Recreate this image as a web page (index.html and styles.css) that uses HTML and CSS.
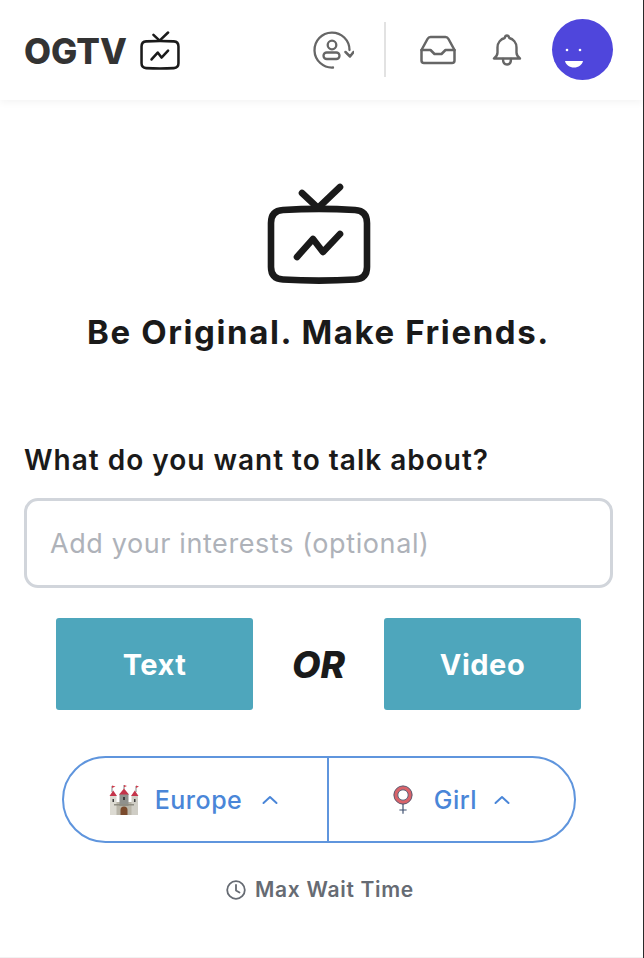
FILE: index.html
```html
<!DOCTYPE html>
<html lang="en">
<head>
  <meta charset="UTF-8" />
  <title>OGTV</title>
  <link rel="stylesheet" href="styles.css">
</head>
<body>

  <header class="topbar">
    <div class="brand">
      <span class="brand-name">OGTV</span>
      <svg class="brand-tv" viewBox="0 0 104 104" fill="none" stroke="#1a1a1a" stroke-width="6.600" stroke-linecap="round" stroke-linejoin="round">
        <path d="M4 40c0-8 4-12.500 12-13 24-1.500 48-1.500 72 0 8 .5 12 5 12 13v44c0 8-4 12-12 12.500-24 1.500-48 1.500-72 0-8-.5-12-4.500-12-12.500z"/>
        <path d="M35 10l16 15 22-21"/>
        <path d="M30 74l16-18 10 13 17-18"/>
      </svg>
    </div>
    <nav class="actions">
      <svg class="icon icon-user" viewBox="0 0 42 42" fill="none" stroke="#666" stroke-width="2.300" stroke-linecap="round" stroke-linejoin="round">
        <path d="M21 38.500A17.500 17.500 0 1 1 37.500 21"/>
        <path d="M33.500 23l4.500 4.500 3.500-4.500" stroke-width="2.500"/>
        <circle cx="20" cy="16" r="4.300"/>
        <rect x="11.500" y="23.500" width="16" height="6.500" rx="3.200"/>
      </svg>
      <span class="divider"></span>
      <svg class="icon icon-inbox" viewBox="0 0 36 30" fill="none" stroke="#666" stroke-width="2.500" stroke-linecap="round" stroke-linejoin="round">
        <path d="M1.500 15v10.500c0 1.500 1 2.500 2.500 2.500h28c1.500 0 2.500-1 2.500-2.500V15L28.500 4C27.800 2.700 27 2 25.500 2h-15C9 2 8.200 2.700 7.500 4z"/>
        <path d="M1.500 15h9l4 4h7l4-4h9"/>
      </svg>
      <svg class="icon icon-bell" viewBox="0 0 30 32" fill="none" stroke="#666" stroke-width="2.400" stroke-linecap="round" stroke-linejoin="round">
        <path d="M2 24.500h26c-2-1.500-3.500-3-3.500-6v-5c0-5-3.500-8.500-7.200-9.500-.3-1.500-1-2.500-2.300-2.500s-2 1-2.300 2.500c-3.700 1-7.200 4.500-7.200 9.500v5c0 3-1.500 4.500-3.500 6z"/>
        <path d="M11 25c0 3.500 1.800 5.500 4 5.500s4-2 4-5.500"/>
      </svg>
      <div class="avatar">
        <svg viewBox="0 0 61 61">
          <circle cx="15" cy="31" r="1.300" fill="#fff"/>
          <circle cx="28" cy="31" r="1.300" fill="#fff"/>
          <path d="M13 42h18c-1 4-4.500 6.500-9 6.500s-8-2.500-9-6.500z" fill="#fff"/>
        </svg>
      </div>
    </nav>
  </header>

  <main class="content">
    <svg class="hero-tv" viewBox="0 0 104 104" fill="none" stroke="#1a1a1a" stroke-width="6.600" stroke-linecap="round" stroke-linejoin="round">
      <path d="M4 40c0-8 4-12.500 12-13 24-1.500 48-1.500 72 0 8 .5 12 5 12 13v44c0 8-4 12-12 12.500-24 1.500-48 1.500-72 0-8-.5-12-4.500-12-12.500z"/>
      <path d="M35 10l16 15 22-21"/>
      <path d="M30 74l16-18 10 13 17-18"/>
    </svg>
    <h1 class="tagline">Be Original. Make Friends.</h1>

    <h2 class="prompt">What do you want to talk about?</h2>
    <input class="interests" type="text" placeholder="Add your interests (optional)" />

    <div class="start-row">
      <button class="start-btn">Text</button>
      <span class="or">OR</span>
      <button class="start-btn">Video</button>
    </div>

    <div class="filters">
      <div class="filter filter-region">
        <svg class="emoji" viewBox="0 0 30 30">
          <path d="M3 1v6M27 1v6M15 0v4" stroke="#666" stroke-width=".8"/>
          <path d="M3 .5l3.500 1L3 3zM27 .5l3 1-3 1.500zM15 0l3 1-3 1.200z" fill="#d03a4c"/>
          <rect x="5" y="17" width="20" height="13" fill="#b9b5a8"/>
          <rect x="10.500" y="9" width="9" height="12" fill="#8f908c"/>
          <rect x="1" y="11" width="6.500" height="19" fill="#dcdad2"/>
          <rect x="22.500" y="11" width="6.500" height="19" fill="#cfcdc5"/>
          <path d="M.5 11L4.200 5.500 8 11zM22 11l3.800-5.500L29.500 11zM10 9.500L15 3.500l5 6z" fill="#c4344a"/>
          <path d="M11.500 30v-5a3.500 3.500 0 0 1 7 0v5z" fill="#7a4a2c"/>
          <path d="M3.500 14h1.500v3H3.500zM25 14h1.500v3H25zM14 12h2v3h-2z" fill="#3d3d3d"/>
          <path d="M5 19h20v1.500H5z" fill="#8f8d82"/>
        </svg>
        <span class="filter-label">Europe</span>
        <svg class="chevron" viewBox="0 0 16 10" fill="none" stroke="#4a86d8" stroke-width="2" stroke-linecap="round" stroke-linejoin="round"><path d="M1.500 8L8 2l6.500 6"/></svg>
      </div>
      <div class="filter filter-gender">
        <svg class="emoji female" viewBox="0 0 22 32" fill="none">
          <circle cx="11" cy="10.500" r="8" stroke="#d9636a" stroke-width="4.500"/>
          <circle cx="11" cy="10.500" r="10" stroke="#4d5a72" stroke-width="1"/>
          <circle cx="11" cy="10.500" r="5.700" stroke="#4d5a72" stroke-width="1"/>
          <path d="M11 20.500V31M7 27h8" stroke="#3f5070" stroke-width="1.300"/>
        </svg>
        <span class="filter-label">Girl</span>
        <svg class="chevron chevron-gender" viewBox="0 0 16 10" fill="none" stroke="#4a86d8" stroke-width="2" stroke-linecap="round" stroke-linejoin="round"><path d="M1.500 8L8 2l6.500 6"/></svg>
      </div>
    </div>

    <div class="wait">
      <svg class="clock" viewBox="0 0 20 20" fill="none" stroke="#666b73" stroke-width="1.800" stroke-linecap="round" stroke-linejoin="round">
        <circle cx="10" cy="10" r="8.800"/>
        <path d="M10 5v5.500l3.500 2"/>
      </svg>
      <span>Max Wait Time</span>
    </div>
  </main>

</body>
</html>
```

FILE: styles.css
```css
* {
  box-sizing: border-box;
}
html {
  background: #2a2a2a;
}
body {
  margin: 0 1px 0 0;
  height: 958px;
  overflow: hidden;
  background: white;
  border-bottom: 1px solid #f2f2f2;
  font-family: "Inter", "Liberation Sans", sans-serif;
}
.topbar {
  height: 100px;
  padding: 19px 30px 0 24px;
  display: flex;
  justify-content: space-between;
  align-items: flex-start;
  background: white;
  box-shadow: 0 2px 8px rgba(0,0,0,0.05);
}
.brand {
  display: flex;
  align-items: center;
  gap: 13px;
  margin-top: 11px;
}
.brand-name {
  font-size: 35px;
  font-weight: 800;
  color: #333;
}
.brand-tv {
  width: 40px;
  height: 40px;
}
.actions {
  display: flex;
  align-items: center;
  height: 61px;
}
.icon {
  display: block;
}
.icon-user {
  width: 42px;
  height: 42px;
}
.divider {
  width: 2px;
  height: 55px;
  margin: 0 34px 0 30px;
  background: #e2e2e2;
}
.icon-inbox {
  width: 36px;
  height: 30px;
  margin-right: 36px;
}
.icon-bell {
  width: 30px;
  height: 32px;
  margin-right: 30px;
}
.avatar {
  width: 61px;
  height: 61px;
  border-radius: 50%;
  background: #4f46dc;
}
.avatar svg {
  display: block;
  width: 100%;
  height: 100%;
}
.content {
  display: flex;
  flex-direction: column;
  align-items: center;
  padding: 83px 30px 0 24px;
}
.hero-tv {
  width: 104px;
  height: 104px;
}
.tagline {
  margin: 23px 0 0;
  font-size: 33px;
  font-weight: 700;
  letter-spacing: 1.6px;
  line-height: 44px;
  color: #1a1a1a;
}
.prompt {
  align-self: flex-start;
  margin: 87px 0 0;
  font-size: 28px;
  font-weight: 600;
  letter-spacing: 1px;
  line-height: 38px;
  color: #1a1a1a;
}
.interests {
  width: 100%;
  height: 90px;
  margin-top: 19px;
  padding: 0 23px;
  border: 3px solid #d1d5db;
  border-radius: 14px;
  font-family: "Inter", sans-serif;
  font-size: 27px;
  letter-spacing: 0.6px;
  color: #333;
  outline: none;
}
.interests::placeholder {
  color: #aeb2b9;
}
.start-row {
  display: flex;
  align-items: center;
  width: 525px;
  margin-top: 30px;
}
.start-btn {
  width: 197px;
  height: 92px;
  border: none;
  border-radius: 3px;
  background: #4ea6bc;
  color: white;
  font-family: "Inter", sans-serif;
  font-size: 29px;
  font-weight: 700;
  letter-spacing: 0.5px;
}
.or {
  flex: 1;
  text-align: center;
  font-size: 37px;
  font-style: italic;
  font-weight: 800;
  color: #1a1a1a;
}
.filters {
  display: flex;
  width: 514px;
  height: 87px;
  margin-top: 46px;
  border: 2px solid #5f95dd;
  border-radius: 44px;
}
.filter {
  display: flex;
  align-items: center;
  justify-content: center;
  height: 100%;
}
.filter-region {
  width: 265px;
  border-right: 2px solid #5f95dd;
  padding-right: 3px;
}
.filter-gender {
  flex: 1;
  padding: 0 2px 0 3px;
}
.emoji {
  width: 30px;
  height: 30px;
  margin-right: 16px;
}
.female {
  width: 20px;
  height: 30px;
  margin-right: 21px;
}
.filter-label {
  font-size: 25px;
  font-weight: 500;
  letter-spacing: 0.5px;
  color: #4a86d8;
}
.chevron {
  width: 16px;
  height: 10px;
  margin-left: 20px;
}
.chevron-gender {
  margin-left: 17px;
}
.wait {
  display: flex;
  align-items: center;
  gap: 9px;
  margin: 34px 0 0 3px;
  font-size: 21px;
  font-weight: 600;
  letter-spacing: 0.7px;
  color: #666b73;
}
.clock {
  width: 20px;
  height: 20px;
}
```
